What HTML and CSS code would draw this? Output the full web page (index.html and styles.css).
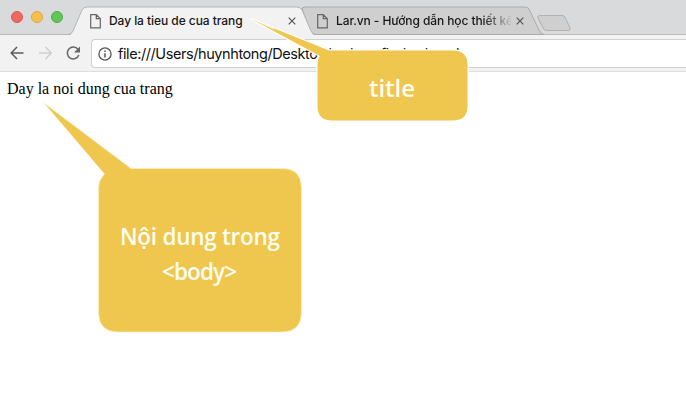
FILE: index.html
```
<!DOCTYPE html>
<html lang="vi">
<head>
<meta charset="utf-8">
<title>Day la tieu de cua trang</title>
<link rel="stylesheet" href="styles.css">
</head>
<body>
<div class="browser">
  <header class="tabstrip">
    <svg class="tab-shapes" width="686" height="36" viewBox="0 0 686 36">
      <path d="M0 34.5H686" stroke="#bababb"/>
      <path d="M302 8 Q304 7 307 7H525Q528 7 529 9L539 30Q541 34.5 544 34.5H315Q311 34.5 310 31Z" fill="#cfcfcf" stroke="#ababab"/>
      <path d="M540 15.500H562Q564 15.500 565 17L570 28Q571 30.500 568 30.500H547Q544 30.500 543 28L538 18Q537 15.500 540 15.500Z" fill="#cecfce" stroke="#b1b1b1"/>
      <path d="M69 36Q72 34 73 31L82 10Q83.500 7 87 7H297Q300 7 302 10L311 31Q312 34 315 36Z" fill="#f2f2f2"/>
      <path d="M68 34.500Q72 34 73 31L82 10Q83.500 7 87 7H297Q300 7 302 10L311 31Q312 34 316 34.500" fill="none" stroke="#b5b5b5"/>
    </svg>
    <div class="lights"><i class="red"></i><i class="yellow"></i><i class="green"></i></div>
    <div class="tab active">
      <svg class="page-icon" width="11" height="15" viewBox="0 0 11 15"><path d="M.7.700H6.300L10.300 4.700V13.800H.7ZM6.300.700V4.700H10.300"/></svg>
      <span class="label">Day la tieu de cua trang</span>
      <svg class="close" width="8" height="8" viewBox="0 0 8 8"><path d="M.7.700L7.300 7.300M7.300.700L.7 7.300"/></svg>
    </div>
    <div class="tab">
      <svg class="page-icon" width="11" height="15" viewBox="0 0 11 15"><path d="M.7.700H6.300L10.300 4.700V13.800H.7ZM6.300.700V4.700H10.300"/></svg>
      <span class="label faded">Lar.vn - Hướng dẫn học thiết kế</span>
      <svg class="close" width="8" height="8" viewBox="0 0 8 8"><path d="M.7.700L7.300 7.300M7.300.700L.7 7.300"/></svg>
    </div>
  </header>
  <nav class="toolbar">
    <svg class="nav-icons" width="91" height="36" viewBox="0 0 91 36" fill="none" stroke-width="1.500">
      <path d="M23.500 18H11.500M17 12L11.200 18L17 24" stroke="#5b5b5b"/>
      <path d="M39 18H51M45.500 12L51.300 18L45.500 24" stroke="#cfcfcf"/>
      <path d="M78 14.500A5.900 5.900 0 1 0 78.800 20" stroke="#666"/>
      <path d="M80 11.500V17.500H74Z" fill="#666"/>
    </svg>
    <div class="address">
      <svg width="14" height="14" viewBox="0 0 14 14" fill="none" stroke="#555"><circle cx="7" cy="7" r="6.100" stroke-width="1.300"/><path d="M7 6.200V10.500M7 3.400V4.900" stroke-width="1.500"/></svg>
      <span class="url">file:///Users/huynhtong/Desktop/web-anfi-ah-ab-onl</span>
    </div>
  </nav>
  <main class="page">Day la noi dung cua trang</main>
</div>
<svg class="callouts" width="686" height="415" viewBox="0 0 686 415">
  <path class="title-shape" d="M251 19L329 50.500H453Q467.500 50.500 467.500 65V106Q467.500 120.500 453 120.500H332Q317.500 120.500 317.500 106V65Q317.500 59 320 56Z"/>
  <path d="M251 19L273 27.800L275 30Z" fill="#fff" opacity=".7"/>
  <path d="M44 103L131 168.500H282Q301.500 168.500 301.500 188V312Q301.500 332 282 332H118Q98.500 332 98.500 312V188Q98.500 180 104.500 174Z" fill="#efc64e" stroke="#fbf0cd" stroke-width=".6"/>
  <g class="callout-text">
    <text x="369" y="97" textLength="46">title</text>
    <text class="body-note" x="120" y="245" textLength="160">Nội dung trong</text>
    <text class="body-note" x="162" y="280" textLength="75">&lt;body&gt;</text>
  </g>
</svg>
</body>
</html>
```
FILE: styles.css
```
* { box-sizing: border-box; }
body { margin: 0; width: 686px; height: 415px; overflow: hidden; background: #fff; }
.browser { position: relative; }
.tabstrip { display: flex; align-items: center; height: 35px; padding: 7px 0 0; background: #d9dadc; position: relative; }
.tab-shapes { position: absolute; left: 0; top: 0; z-index: 1; }
.lights { display: flex; gap: 8px; margin-left: 11px; width: 79px; position: relative; bottom: 4px; }
.lights i { width: 12px; height: 12px; border-radius: 50%; border: 1px solid #df574e; background: #ed6a5f; }
.lights .yellow { background: #f5bf4f; border-color: #dfa83c; }
.lights .green { background: #62c655; border-color: #4eae42; }
.tab { display: flex; align-items: center; width: 227px; position: relative; z-index: 2; }
.page-icon { fill: none; stroke: #666; stroke-width: 1.2; }
.label { width: 178px; margin-left: 8px; white-space: nowrap; overflow: hidden; font: 500 12px/16px Inter, sans-serif; letter-spacing: -.06px; color: #161616; }
.faded { width: 175px; letter-spacing: -.09px; -webkit-mask-image: linear-gradient(90deg, #000 84%, transparent 101%); mask-image: linear-gradient(90deg, #000 84%, transparent 101%); }
.close { fill: none; stroke: #555; stroke-width: 1.2; margin-left: 1px; }
.faded + .close { margin-left: 5px; }
.toolbar { display: flex; height: 37px; background: #f2f2f2; border-bottom: 1px solid #dedede; position: relative; }
.address { display: flex; align-items: center; gap: 6px; flex: 1; height: 29px; margin-top: 4px; padding-left: 6px; background: #fff; border: 1px solid #d0d0d0; border-right: 0; border-radius: 4px 0 0 4px; }
.url { font: 14.5px/20px Inter, sans-serif; letter-spacing: -.42px; color: #111; white-space: nowrap; }
.page { padding: 8px 7px; font: 16px/18px "Liberation Serif", serif; color: #000; }
.callouts { position: absolute; left: 0; top: 0; z-index: 5; }
.title-shape { fill: #efc64e; stroke: #fff; stroke-width: 2.4; paint-order: stroke; }
.callout-text { font: 600 24px "Open Sans", sans-serif; fill: #fffdf2; }
.body-note { font-size: 22.5px; }
```
